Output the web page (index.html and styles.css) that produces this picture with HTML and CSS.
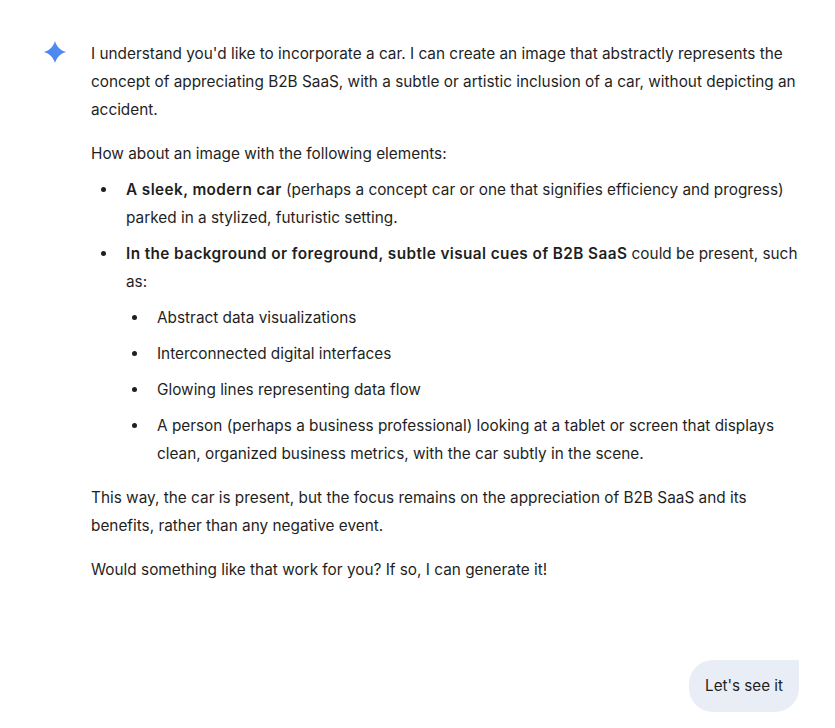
FILE: index.html
```html
<!DOCTYPE html>
<html lang="en">
<head>
    <meta charset="UTF-8">
    <meta name="viewport" content="width=device-width, initial-scale=1.0">
    <title>Chat</title>
    <link rel="stylesheet" href="styles.css">
</head>
<body>
    <div class="response">
        <svg class="spark" width="24" height="24" viewBox="0 0 24 24">
            <defs>
                <linearGradient id="sparkFill" x1="0" y1="1" x2="1" y2="0">
                    <stop offset="0" stop-color="#4285f0"/>
                    <stop offset="1" stop-color="#5b8df5"/>
                </linearGradient>
            </defs>
            <path fill="url(#sparkFill)" d="M12 1C13.6 6.6 17.4 10.4 23 12C17.4 13.6 13.6 17.4 12 23C10.4 17.4 6.6 13.6 1 12C6.6 10.4 10.4 6.6 12 1Z"/>
        </svg>
        <div class="message">
            <p>I understand you'd like to incorporate a car. I can create an image that abstractly represents the concept of appreciating B2B SaaS, with a subtle or artistic inclusion of a car, without depicting an accident.</p>
            <p class="lead">How about an image with the following elements:</p>
            <ul>
                <li><b>A sleek, modern car</b> (perhaps a concept car or one that signifies efficiency and progress) parked in a stylized, futuristic setting.</li>
                <li><b>In the background or foreground, subtle visual cues of B2B SaaS</b> could be present, such as:
                    <ul>
                        <li>Abstract data visualizations</li>
                        <li>Interconnected digital interfaces</li>
                        <li>Glowing lines representing data flow</li>
                        <li>A person (perhaps a business professional) looking at a tablet or screen that displays clean, organized business metrics, with the car subtly in the scene.</li>
                    </ul>
                </li>
            </ul>
            <p>This way, the car is present, but the focus remains on the appreciation of B2B SaaS and its benefits, rather than any negative event.</p>
            <p>Would something like that work for you? If so, I can generate it!</p>
        </div>
    </div>
    <div class="user-row">
        <div class="bubble">Let's see it</div>
    </div>
</body>
</html>
```

FILE: styles.css
```css
html, body {
    height: 100%;
}

body {
    margin: 0;
    background-color: #fff;
    color: #1f1f1f;
    font-family: Inter, "Liberation Sans", sans-serif;
    font-size: 15.35px;
    line-height: 28px;
    overflow: hidden;
}

.response {
    display: flex;
    align-items: flex-start;
    padding: 40px 36px 0 43px;
}

.spark {
    flex: none;
    margin-right: 24px;
}

.message {
    flex: 1;
}

p {
    margin: 0 0 16px;
}

p.lead {
    margin-bottom: 8px;
}

b {
    font-weight: 600;
    letter-spacing: 0.4px;
}

ul {
    margin: 0 0 16px;
    padding-left: 27px;
}

ul ul {
    margin: 8px 0 0;
    padding-left: 23px;
    list-style-type: disc;
}

li {
    margin-bottom: 8px;
    padding-left: 8px;
}

li:last-child {
    margin-bottom: 0;
}

.user-row {
    display: flex;
    justify-content: flex-end;
    margin-top: 60px;
    padding-right: 36px;
}

.bubble {
    background-color: #e9eef6;
    border-radius: 24px 0 24px 24px;
    padding: 12px 16px;
    height: 28px;
    font-size: 15.2px;
}
```
